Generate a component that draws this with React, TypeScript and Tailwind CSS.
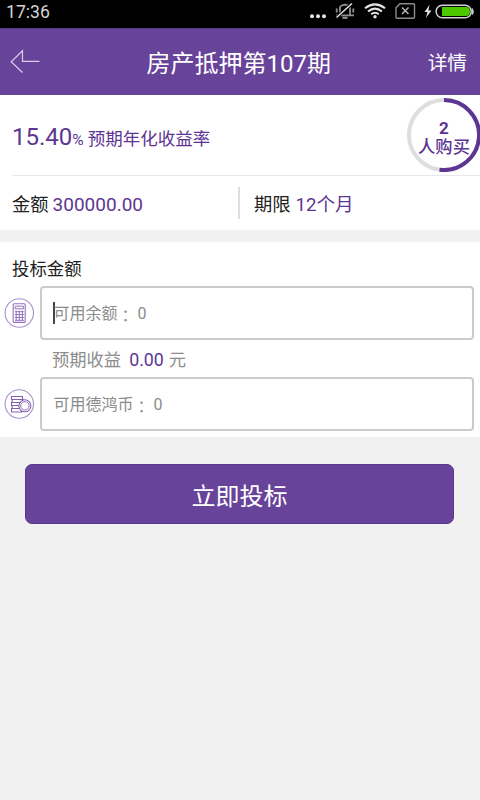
import type { ReactNode } from 'react'

function StatusBar() {
  return (
    <div className="flex h-7 items-center justify-between bg-black pl-[6px] text-[#d4d4d4]">
      <span className="-mt-1 text-[17.6px] leading-6">17:36</span>
      <svg width="180" height="28" viewBox="0 0 180 28" fill="none">
        <g fill="#e4e4e4">
          <circle cx="12" cy="16.3" r="2" />
          <circle cx="18" cy="16.3" r="2" />
          <circle cx="24" cy="16.3" r="2" />
        </g>
        {/* muted bell */}
        <g stroke="#909090" strokeWidth="1.8">
          <path d="M36 15.4h4V7.5Q40.5 5 45 4.6q4.5.4 5 2.9v7.9h4M40 15.4h10" />
          <path d="M36.7 8.5v4M53.3 8.5v4" />
          <path d="M42.5 17.8h5" strokeWidth="2.2" />
        </g>
        <path d="M36.5 17.5 52 3.5" stroke="#000" strokeWidth="3.2" />
        <path d="M36.5 17.5 52 3.5" stroke="#e4e4e4" strokeWidth="1.5" />
        {/* wifi */}
        <g stroke="#e4e4e4" strokeWidth="2">
          <path d="M65 8.3Q75 .5 85 8.3" />
          <path d="M68 11.5Q75 5.8 82 11.5" />
          <path d="M71.2 14.3Q75 11.3 78.8 14.3" />
        </g>
        <circle cx="75" cy="16.8" r="1.7" fill="#e4e4e4" />
        {/* no sim */}
        <path d="M100 3.7h13.5q1 0 1 1v12.6q0 1-1 1H97q-1 0-1-1V7.7z" stroke="#8c8c8c" strokeWidth="1.4" />
        <path d="m102 7.5 6.5 6.5m0-6.5L102 14" stroke="#b4b4b4" strokeWidth="1.5" />
        {/* charging battery */}
        <path d="m129.5 4.8-5 7.2h3l-1.7 6 5.7-7.5h-3.1z" fill="#e4e4e4" />
        <rect x="136.2" y="5.2" width="35" height="12.6" rx="6" stroke="#d2d2d2" strokeWidth="1.5" />
        <path d="M172.2 8.5q1.6 3 0 6" stroke="#d2d2d2" strokeWidth="1.5" />
        <path d="M142 7h24q4 0 4 4.5t-4 4.5h-24z" fill="#4cc800" />
      </svg>
    </div>
  )
}

function Header() {
  return (
    <header className="flex h-[67px] items-center justify-between border-t border-[#57378a] bg-[#68439a] pr-[13px] pl-[10px] text-white">
      <svg width="30" height="26" viewBox="0 0 30 26" fill="none" stroke="#d9cbea" strokeWidth="1.2">
        <path d="M12.5 23.5 1.2 12.7 12.5 1.7v10.7h17" />
      </svg>
      <h1 className="ml-[10px] pt-[3px] text-2xl">房产抵押第107期</h1>
      <span className="pt-[3px] text-[19.7px]">详情</span>
    </header>
  )
}

function BuyerRing() {
  return (
    <div className="relative mr-[-1px] flex size-[74px] flex-col items-center justify-center text-[#5d3592]">
      <svg className="absolute inset-0" width="74" height="74" viewBox="0 0 74 74" fill="none" strokeWidth="4">
        <circle cx="37" cy="37" r="35" stroke="#dedede" />
        <path d="M37 2a35 35 0 1 1-4.5 69.7" stroke="#5d3592" />
      </svg>
      <span className="mt-[7px] text-[17px] leading-[17px] font-bold">2</span>
      <span className="text-[17.3px] leading-[20px] font-medium">人购买</span>
    </div>
  )
}

function AmountField({ icon, label, focused }: { icon: ReactNode; label: string; focused?: boolean }) {
  return (
    <div className="flex items-center pr-[6px] pl-[4px]">
      {icon}
      <div className="ml-[6px] flex h-[54px] flex-1 items-center rounded-[4px] border-2 border-[#cbcbcb] pl-[11px] text-base text-[#8c8c8c]">
        <span className={focused ? 'h-[22px] w-[1.5px] bg-[#444]' : 'w-[0.5px]'} />
        <span className={focused ? '-ml-px pt-[2px]' : 'pt-[2px]'}>{label}</span>
        <span className="pt-[4px] font-['Noto_Sans_CJK_TC',sans-serif]" lang="zh-TW">：</span>
        <span className="ml-[4px] pt-[2px]">0</span>
      </div>
    </div>
  )
}

function CalculatorIcon() {
  return (
    <svg width="30" height="30" viewBox="0 0 30 30" fill="none" stroke="#9270bd" strokeWidth="1.1">
      <circle cx="15.3" cy="15" r="14.2" stroke="#ab90cf" />
      <rect x="9.2" y="5.8" width="12" height="18.6" rx="1" />
      <path d="M11.2 8.2h8.2v2.6h-8.2z" strokeWidth="1" />
      <path d="M11 13.7h8.8M11 16.6h8.8M11 19.5h8.8M11 22.3h8.8M12.2 12.7v10.2M15.3 12.7v10.2M18.4 12.7v10.2" strokeWidth="1" />
    </svg>
  )
}

function CoinsIcon() {
  return (
    <svg width="30" height="30" viewBox="0 0 30 30" fill="none" stroke="#8560b4" strokeWidth="1.1">
      <circle cx="15.3" cy="15" r="14.2" stroke="#ab90cf" />
      <path d="M7.5 7.5h11v3h-11zM8.2 10.5h11v3h-11zM7.5 13.5H16v3H7.500zM8.2 16.500h8v3h-8zM7.5 19.500h10V23h-10z" />
      <circle cx="20.9" cy="16.8" r="6" fill="#fff" />
      <circle cx="20.9" cy="16.8" r="4.2" strokeWidth=".9" />
    </svg>
  )
}

export default function App() {
  return (
    <div className="h-[800px] w-[480px] overflow-hidden bg-[#f1f1f1] font-['Roboto','Noto_Sans_CJK_SC',sans-serif] text-[#222]">
      <StatusBar />
      <Header />

      <section className="h-[135px] bg-white">
        <div className="ml-3 flex h-[81px] items-center justify-between border-b border-[#e8e8e8] text-[#5d3592]">
          <div className="mt-[3px] flex items-baseline">
            <span className="text-2xl">15.40</span>
            <span className="text-[15.5px]">%</span>
            <span className="ml-[4px] text-[17.5px]">预期年化收益率</span>
          </div>
          <BuyerRing />
        </div>
        <div className="flex h-[54px] items-center pl-3">
          <div className="flex w-[226px] items-baseline pt-[4px]">
            <span className="text-[18.3px]">金额</span>
            <span className="ml-[4px] text-[19px] text-[#5d3592]">300000.00</span>
          </div>
          <div className="h-8 w-[2px] bg-[#dedede]" />
          <div className="ml-[14px] flex items-baseline pt-[4px]">
            <span className="text-[18.3px]">期限</span>
            <span className="ml-[5px] text-[18.6px] text-[#5d3592]">12个月</span>
          </div>
        </div>
      </section>

      <section className="mt-3 h-[195px] bg-white">
        <h2 className="flex h-[44px] items-center pt-[10px] pl-3 text-[17.4px]">投标金额</h2>
        <AmountField icon={<CalculatorIcon />} label="可用余额" focused />
        <div className="flex h-[37px] items-center pt-[4px] pl-[52px] text-[17.3px] text-[#8c8c8c]">
          <span>预期收益</span>
          <span className="mr-[5px] ml-[8px] text-[17.8px] text-[#5d3592]">0.00</span>
          <span>元</span>
        </div>
        <AmountField icon={<CoinsIcon />} label="可用德鸿币" />
      </section>

      <button className="mt-[27px] ml-[25px] flex h-[60px] w-[429px] items-center justify-center rounded-[7px] border border-[#5d3592] bg-[#68439a] pt-[6px] text-2xl text-white">
        立即投标
      </button>
    </div>
  )
}
